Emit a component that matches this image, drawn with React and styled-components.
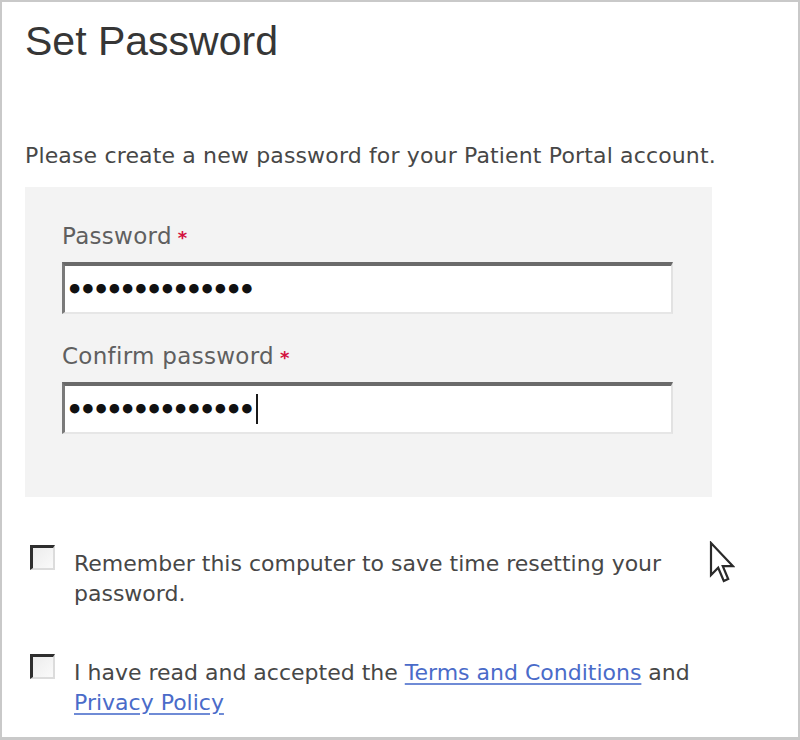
import React from "react";
import styled, { createGlobalStyle } from "styled-components";

const Global = createGlobalStyle`
  html, body { margin: 0; padding: 0; background: #ffffff; }
  * { box-sizing: border-box; }
`;

const Frame = styled.div`
  position: relative;
  width: 800px;
  height: 740px;
  border: 2px solid #c9c9c9;
  border-bottom-width: 3px;
  padding: 16px 0 0 23px;
  background: #ffffff;
  font-family: "DejaVu Sans", Verdana, sans-serif;
  overflow: hidden;
`;

const Title = styled.h1`
  margin: 0;
  font-family: "Liberation Sans", Arial, sans-serif;
  font-weight: 400;
  font-size: 41px;
  line-height: 46px;
  color: #363636;
`;

const Intro = styled.p`
  margin: 77px 0 0;
  font-size: 22px;
  line-height: 30px;
  letter-spacing: 0.15px;
  color: #474747;
`;

const Panel = styled.div`
  margin-top: 16px;
  width: 687px;
  padding: 34px 39px 63px 37px;
  background: #f3f3f3;
  display: flex;
  flex-direction: column;
  gap: 27px;
`;

const FieldGroup = styled.div`
  display: flex;
  flex-direction: column;
  gap: 11px;
`;

const Label = styled.label`
  display: block;
  height: 30px;
  font-size: 23px;
  line-height: 30px;
  letter-spacing: 0.3px;
  color: #5f5f5f;
`;

const Req = styled.span`
  margin-left: 6px;
  color: #d3113e;
  font-weight: 700;
  font-size: 18px;
  line-height: 1;
`;

const Field = styled.div`
  height: 52px;
  display: flex;
  align-items: center;
  padding-left: 1px;
  background: #ffffff;
  border-top: 4px solid #6a6a6a;
  border-left: 3px solid #7a7a7a;
  border-right: 2px solid #e2e2e2;
  border-bottom: 2px solid #e6e6e6;
`;

const Dots = styled.span`
  font-family: "DejaVu Sans", sans-serif;
  font-weight: 700;
  font-size: 27px;
  line-height: 1;
  letter-spacing: -4px;
  color: #111111;
`;

const Caret = styled.span`
  display: inline-block;
  width: 2px;
  height: 30px;
  margin-left: 4px;
  background: #1a1a1a;
`;

const Options = styled.div`
  margin-top: 48px;
  margin-left: 5px;
  display: flex;
  flex-direction: column;
  gap: 45px;
`;

const Option = styled.div`
  display: flex;
  align-items: flex-start;
  gap: 19px;
`;

const Box = styled.span`
  display: block;
  flex: none;
  width: 25px;
  height: 25px;
  background: linear-gradient(135deg, #ececec, #fafafa);
  border-style: solid;
  border-width: 3px 2px 2px 3px;
  border-color: #2e2e2e #dcdcdc #dcdcdc #2e2e2e;
`;

const OptionText = styled.div`
  padding-top: 4px;
  max-width: 650px;
  font-size: 22px;
  line-height: 30px;
  color: #474747;
`;

const Link = styled.a`
  color: #4a6bc9;
  text-decoration: underline;
  text-decoration-color: #6f8bd6;
  text-underline-offset: 3px;
  cursor: pointer;
`;

const Pointer = styled.svg`
  position: absolute;
  left: 707px;
  top: 539px;
  width: 26px;
  height: 44px;
`;

const dots = "\u2022".repeat(14);

export default function App() {
  return (
    <>
      <Global />
      <Frame>
        <Title>Set Password</Title>
        <Intro>Please create a new password for your Patient Portal account.</Intro>
        <Panel>
          <FieldGroup>
            <Label>
              Password<Req>*</Req>
            </Label>
            <Field>
              <Dots>{dots}</Dots>
            </Field>
          </FieldGroup>
          <FieldGroup>
            <Label>
              Confirm password<Req>*</Req>
            </Label>
            <Field>
              <Dots>{dots}</Dots>
              <Caret />
            </Field>
          </FieldGroup>
        </Panel>
        <Options>
          <Option>
            <Box />
            <OptionText>
              Remember this computer to save time resetting your password.
            </OptionText>
          </Option>
          <Option>
            <Box />
            <OptionText>
              I have read and accepted the <Link>Terms and Conditions</Link> and{" "}
              <Link>Privacy Policy</Link>
            </OptionText>
          </Option>
        </Options>
        <Pointer viewBox="0 0 13 22">
          <path
            d="M1 1 L1 17 L4.6 13.4 L7.4 20 L9.6 19 L6.9 12.6 L12 12.6 Z"
            fill="#ffffff"
            stroke="#2a2a2a"
            strokeWidth="1.1"
            strokeLinejoin="miter"
          />
        </Pointer>
      </Frame>
    </>
  );
}
